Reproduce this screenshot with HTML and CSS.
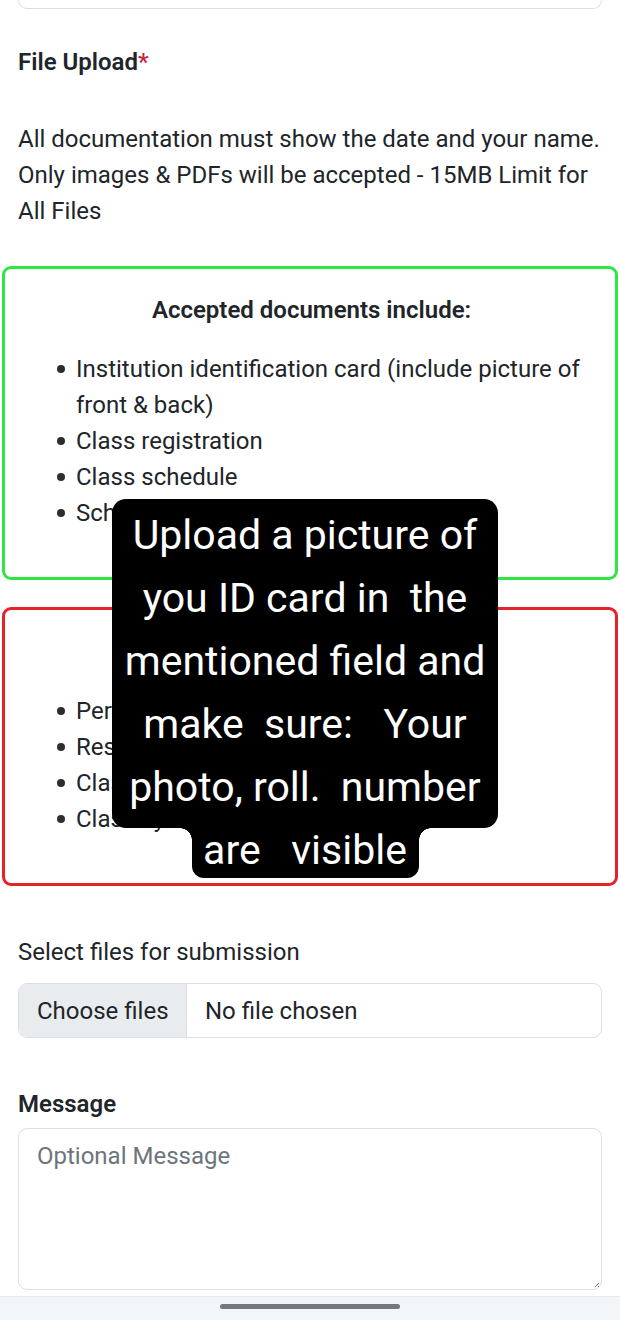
FILE: index.html
```html
<!DOCTYPE html>
<html lang="en">
<head>
<meta charset="utf-8">
<title>File Upload</title>
<link rel="stylesheet" href="styles.css">
</head>
<body>
<main class="page">
  <div class="prev-field"></div>

  <div class="label label-upload">File Upload<span class="req">*</span></div>

  <p class="note">All documentation must show the date and your name. Only images &amp; PDFs will be accepted - 15MB Limit for All Files</p>

  <section class="doc-box doc-ok">
    <h3 class="doc-title">Accepted documents include:</h3>
    <ul class="doc-list">
      <li>Institution identification card (include picture of front &amp; back)</li>
      <li>Class registration</li>
      <li>Class schedule</li>
      <li>School transcript</li>
    </ul>
  </section>

  <section class="doc-box doc-bad">
    <h3 class="doc-title">Not accepted documents:</h3>
    <ul class="doc-list">
      <li>Personal identification</li>
      <li>Residency documents</li>
      <li>Class assignments</li>
      <li>Class syllabus</li>
    </ul>
  </section>

  <div class="field-label">Select files for submission</div>
  <div class="file-input">
    <span class="file-btn">Choose files</span>
    <span class="file-name">No file chosen</span>
  </div>

  <div class="label label-message">Message</div>
  <div class="textarea">
    <span class="placeholder">Optional Message</span>
    <svg class="resize" width="6" height="6" viewBox="0 0 6 6"><path d="M5 1 L1 5 M5 4 L4 5" stroke="#666" stroke-width="1"/></svg>
  </div>
</main>

<div class="nav-bar"><span class="nav-pill"></span></div>

<div class="caption">
  <div class="cap-main">
    <div class="cap-line">Upload a picture of</div>
    <div class="cap-line">you ID card in  the</div>
    <div class="cap-line">mentioned field and</div>
    <div class="cap-line">make  sure:   Your</div>
    <div class="cap-line">photo, roll.  number</div>
  </div>
  <div class="cap-last"><div class="cap-line">are   visible</div></div>
</div>
</body>
</html>
```
FILE: styles.css
```css
* { box-sizing: border-box; }

html, body {
  margin: 0;
  padding: 0;
  background: #ffffff;
}

body {
  font-family: Roboto, "Liberation Sans", Arial, sans-serif;
  color: #212529;
  font-size: 24px;
  line-height: 36px;
  width: 620px;
  height: 1320px;
  overflow: hidden;
  position: relative;
}

.page {
  padding: 0 18px;
  display: flex;
  flex-direction: column;
}

.prev-field {
  height: 9px;
  border: 1px solid #dcdfe3;
  border-top: none;
  border-radius: 0 0 9px 9px;
}

.label {
  font-weight: 600;
  font-size: 24px;
  line-height: 36px;
  color: #212529;
}

.label-upload { margin-top: 35px; }

.req { color: #c8283a; font-weight: 500; }

.note {
  margin: 41px 0 0;
  font-size: 24px;
  line-height: 36px;
}

.doc-box {
  margin: 37px -16px 0;
  border: 3px solid #2ee63f;
  border-radius: 9px;
  padding: 23px 17px 46px 20px;
}

.doc-ok { border-color: #30e641; }

.doc-bad {
  margin-top: 27px;
  border-color: #e4222a;
}

.doc-title {
  margin: 0;
  text-align: center;
  font-weight: 600;
  font-size: 24px;
  line-height: 36px;
}

.doc-list {
  margin: 23px 0 0;
  padding-left: 51px;
  list-style: none;
}

.doc-bad .doc-list { margin-top: 24px; }

.doc-list li {
  line-height: 36px;
  position: relative;
}

.doc-list li::before {
  content: "";
  position: absolute;
  left: -19px;
  top: 14px;
  width: 8px;
  height: 8px;
  border-radius: 50%;
  background: #2b2f33;
}

.field-label {
  margin-top: 48px;
  line-height: 36px;
}

.file-input {
  margin-top: 13px;
  height: 55px;
  border: 1px solid #dcdfe3;
  border-radius: 9px;
  display: flex;
  align-items: stretch;
  overflow: hidden;
}

.file-btn {
  background: #e9ecef;
  border-right: 1px solid #dcdfe3;
  width: 168px;
  padding: 0 0 0 18px;
  display: flex;
  align-items: center;
}

.file-name {
  padding-left: 18px;
  display: flex;
  align-items: center;
}

.label-message { margin-top: 48px; }

.textarea {
  margin-top: 6px;
  height: 162px;
  border: 1px solid #dcdfe3;
  border-radius: 9px;
  padding: 9px 18px;
  position: relative;
}

.placeholder {
  color: #6c757d;
  line-height: 36px;
}

.resize {
  position: absolute;
  right: 1px;
  bottom: 1px;
}

.nav-bar {
  margin-top: 6px;
  height: 24px;
  background: #f2f6f9;
  border-top: 1px solid #e4e9ed;
  display: flex;
  justify-content: center;
  padding-top: 7px;
}

.nav-pill {
  width: 180px;
  height: 5px;
  border-radius: 3px;
  background: #76797c;
}

/* caption overlay */
.caption {
  position: absolute;
  left: 112px;
  top: 499px;
  width: 386px;
  color: #ffffff;
  font-family: Roboto, "Liberation Sans", Arial, sans-serif;
  font-size: 41px;
  line-height: 63px;
  text-align: center;
}

.cap-line { white-space: pre; }

.cap-main {
  background: #000;
  border-radius: 14px;
  padding: 5px 0 9px;
}

.cap-last {
  position: relative;
  margin: -9px auto 0;
  width: 227px;
  height: 59px;
  background: #000;
  border-radius: 0 0 12px 12px;
}

.cap-last .cap-line { line-height: 63px; }

.cap-last::before,
.cap-last::after {
  content: "";
  position: absolute;
  top: 9px;
  width: 12px;
  height: 12px;
}

.cap-last::before {
  left: -12px;
  background: radial-gradient(circle at 0 100%, transparent 11.5px, #000 12px);
}

.cap-last::after {
  right: -12px;
  background: radial-gradient(circle at 100% 100%, transparent 11.5px, #000 12px);
}
```
